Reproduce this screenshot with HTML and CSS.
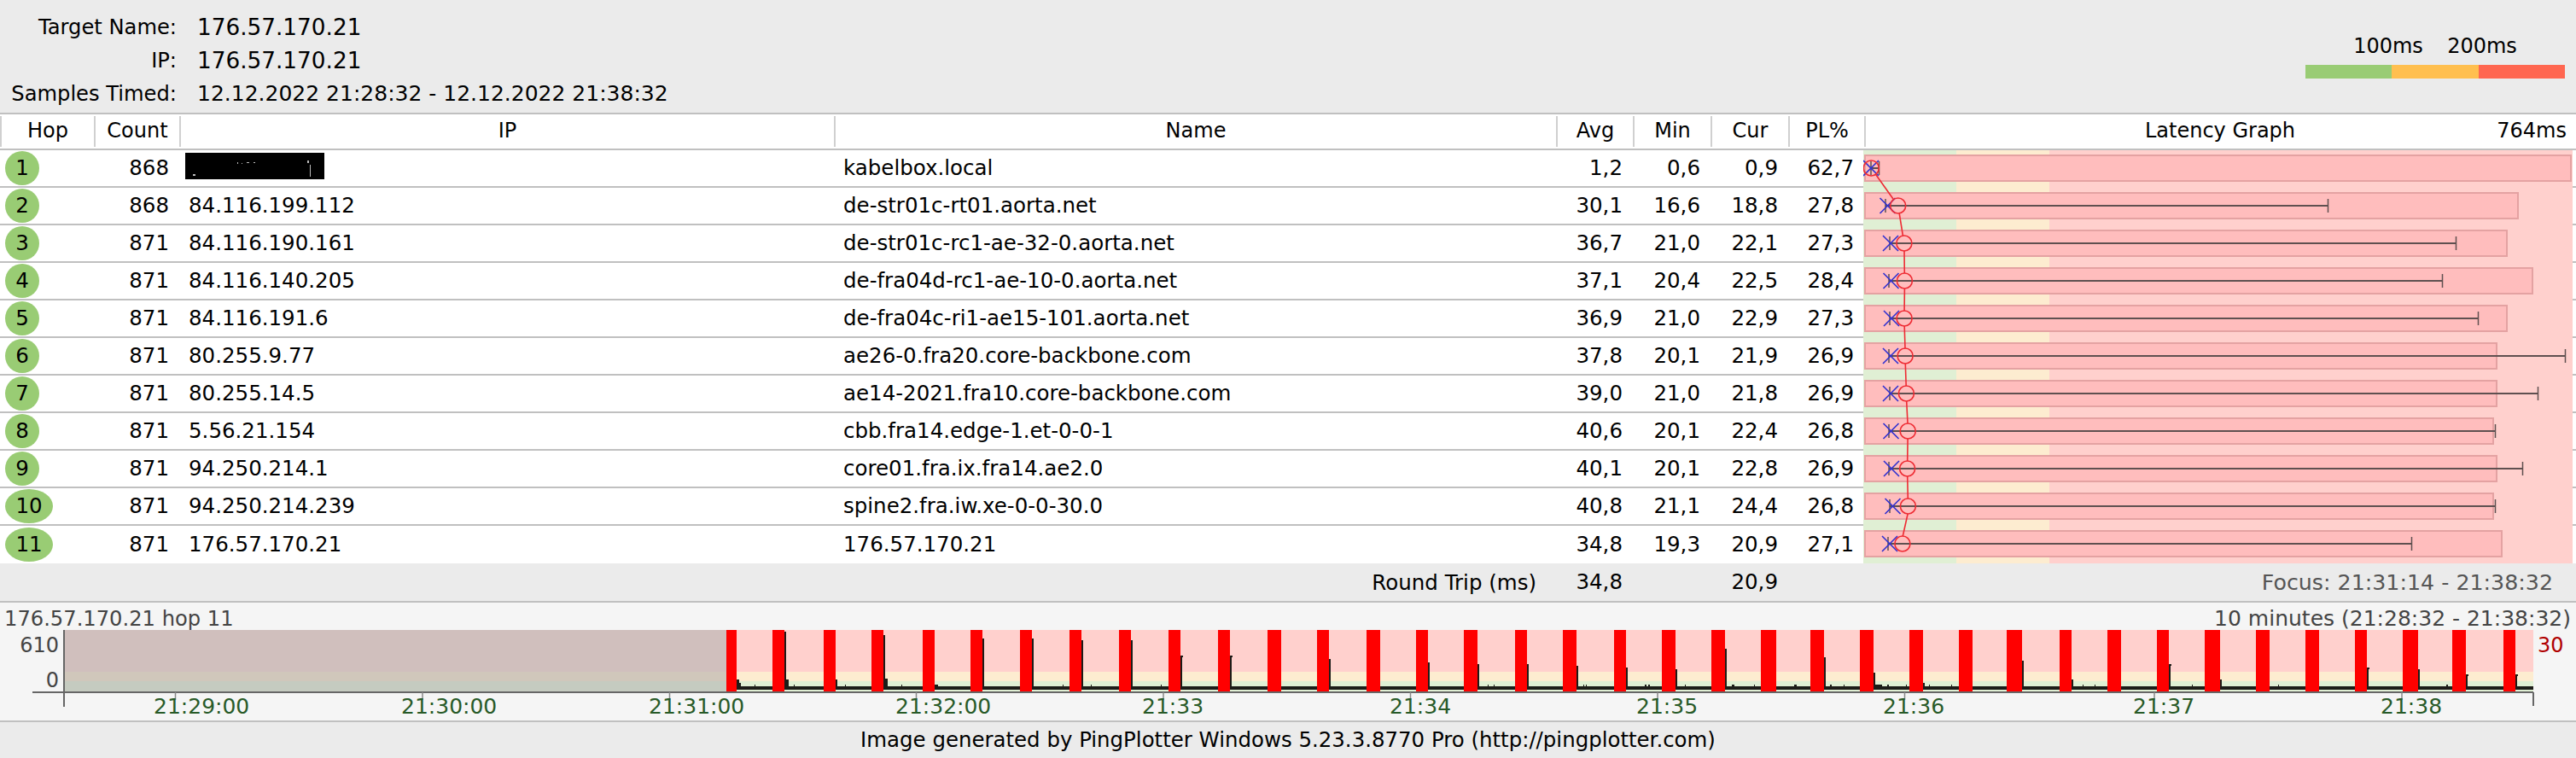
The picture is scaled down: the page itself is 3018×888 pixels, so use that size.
FILE: index.html
```html
<!DOCTYPE html>
<html lang="en">
<head>
<meta charset="utf-8">
<title>PingPlotter</title>
<link rel="stylesheet" href="styles.css">
</head>
<body>
<header class="summary">
  <dl class="fields">
    <dt>Target Name:</dt><dd>176.57.170.21</dd>
    <dt>IP:</dt><dd>176.57.170.21</dd>
    <dt>Samples Timed:</dt><dd class="long">12.12.2022 21:28:32 - 12.12.2022 21:38:32</dd>
  </dl>
  <div class="legend">
    <div class="legend-labels"><span>100ms</span><span>200ms</span></div>
    <div class="legend-bar"><i class="seg-green"></i><i class="seg-yellow"></i><i class="seg-red"></i></div>
  </div>
</header>
<div class="cols head">
  <div class="hc">Hop</div><div class="hc">Count</div><div class="hc">IP</div><div class="hc">Name</div>
  <div class="hc">Avg</div><div class="hc">Min</div><div class="hc">Cur</div><div class="hc">PL%</div>
  <div class="hc graph-head"><span>Latency Graph</span><span class="scale">764ms</span></div>
</div>
<main class="rows">
  <div class="cols row"><div class="c hop"><b>1</b></div><div class="c num">868</div><div class="c txt"><svg class="redact" width="163" height="31" viewBox="0 0 163 31"><rect width="163" height="31" fill="#000"/><path d="M61 11h1v2h-1zM66 12h1v1h-1zM72 11h3v1h-3zM80 11h2v1h-2zM143 9h2v3h-2zM146 14h1v14h-1zM9 25h3v2h-3z" fill="#bbb"/></svg></div><div class="c txt">kabelbox.local</div><div class="c num">1,2</div><div class="c num">0,6</div><div class="c num">0,9</div><div class="c num">62,7</div></div>
  <div class="cols row"><div class="c hop"><b>2</b></div><div class="c num">868</div><div class="c txt">84.116.199.112</div><div class="c txt">de-str01c-rt01.aorta.net</div><div class="c num">30,1</div><div class="c num">16,6</div><div class="c num">18,8</div><div class="c num">27,8</div></div>
  <div class="cols row"><div class="c hop"><b>3</b></div><div class="c num">871</div><div class="c txt">84.116.190.161</div><div class="c txt">de-str01c-rc1-ae-32-0.aorta.net</div><div class="c num">36,7</div><div class="c num">21,0</div><div class="c num">22,1</div><div class="c num">27,3</div></div>
  <div class="cols row"><div class="c hop"><b>4</b></div><div class="c num">871</div><div class="c txt">84.116.140.205</div><div class="c txt">de-fra04d-rc1-ae-10-0.aorta.net</div><div class="c num">37,1</div><div class="c num">20,4</div><div class="c num">22,5</div><div class="c num">28,4</div></div>
  <div class="cols row"><div class="c hop"><b>5</b></div><div class="c num">871</div><div class="c txt">84.116.191.6</div><div class="c txt">de-fra04c-ri1-ae15-101.aorta.net</div><div class="c num">36,9</div><div class="c num">21,0</div><div class="c num">22,9</div><div class="c num">27,3</div></div>
  <div class="cols row"><div class="c hop"><b>6</b></div><div class="c num">871</div><div class="c txt">80.255.9.77</div><div class="c txt">ae26-0.fra20.core-backbone.com</div><div class="c num">37,8</div><div class="c num">20,1</div><div class="c num">21,9</div><div class="c num">26,9</div></div>
  <div class="cols row"><div class="c hop"><b>7</b></div><div class="c num">871</div><div class="c txt">80.255.14.5</div><div class="c txt">ae14-2021.fra10.core-backbone.com</div><div class="c num">39,0</div><div class="c num">21,0</div><div class="c num">21,8</div><div class="c num">26,9</div></div>
  <div class="cols row"><div class="c hop"><b>8</b></div><div class="c num">871</div><div class="c txt">5.56.21.154</div><div class="c txt">cbb.fra14.edge-1.et-0-0-1</div><div class="c num">40,6</div><div class="c num">20,1</div><div class="c num">22,4</div><div class="c num">26,8</div></div>
  <div class="cols row"><div class="c hop"><b>9</b></div><div class="c num">871</div><div class="c txt">94.250.214.1</div><div class="c txt">core01.fra.ix.fra14.ae2.0</div><div class="c num">40,1</div><div class="c num">20,1</div><div class="c num">22,8</div><div class="c num">26,9</div></div>
  <div class="cols row"><div class="c hop"><b class="wide">10</b></div><div class="c num">871</div><div class="c txt">94.250.214.239</div><div class="c txt">spine2.fra.iw.xe-0-0-30.0</div><div class="c num">40,8</div><div class="c num">21,1</div><div class="c num">24,4</div><div class="c num">26,8</div></div>
  <div class="cols row last"><div class="c hop"><b class="wide">11</b></div><div class="c num">871</div><div class="c txt">176.57.170.21</div><div class="c txt">176.57.170.21</div><div class="c num">34,8</div><div class="c num">19,3</div><div class="c num">20,9</div><div class="c num">27,1</div></div>
  <svg class="graph" width="831" height="484" viewBox="2183 176 831 484">
    <rect class="b-green" x="2183" y="176" width="109" height="484"/>
    <rect class="b-yellow" x="2292" y="176" width="109" height="484"/>
    <rect class="b-pink" x="2401" y="176" width="613" height="484"/>
    <g class="pl">
      <rect x="2185" y="182" width="827" height="30"/>
      <rect x="2185" y="226" width="765" height="30"/>
      <rect x="2185" y="270" width="752" height="30"/>
      <rect x="2185" y="314" width="782" height="30"/>
      <rect x="2185" y="358" width="752" height="30"/>
      <rect x="2185" y="402" width="740" height="30"/>
      <rect x="2185" y="446" width="740" height="30"/>
      <rect x="2185" y="490" width="736" height="30"/>
      <rect x="2185" y="534" width="740" height="30"/>
      <rect x="2185" y="578" width="736" height="30"/>
      <rect x="2185" y="622" width="746" height="30"/>
    </g>
    <path class="span" d="M2192 197H2201M2209 241H2727M2214 285H2877M2213 329H2861M2214 373H2903M2213 417H3005M2214 461H2973M2213 505H2923M2213 549H2955M2214 593H2923M2212 637H2825"/>
    <path class="tick" d="M2192 189v16M2201.5 189v16M2209 233v16M2727.5 233v16M2214 277v16M2877.5 277v16M2213 321v16M2861.5 321v16M2214 365v16M2903.5 365v16M2213 409v16M3005.5 409v16M2214 453v16M2973.5 453v16M2213 497v16M2923.5 497v16M2213 541v16M2955.5 541v16M2214 585v16M2923.5 585v16M2212 629v16M2825.5 629v16"/>
    <path class="cur" d="M2183 188l18 18M2201 188l-18 18M2202.5 232l18 18M2220.5 232l-18 18M2206 276l18 18M2224 276l-18 18M2206.5 320l18 18M2224.5 320l-18 18M2207 364l18 18M2225 364l-18 18M2206 408l18 18M2224 408l-18 18M2206 452l18 18M2224 452l-18 18M2206.5 496l18 18M2224.5 496l-18 18M2207 540l18 18M2225 540l-18 18M2208.5 584l18 18M2226.5 584l-18 18M2205 628l18 18M2223 628l-18 18"/>
    <g class="avg">
      <circle cx="2192.3" cy="197" r="9"/><circle cx="2223.7" cy="241" r="9"/><circle cx="2230.9" cy="285" r="9"/><circle cx="2231.4" cy="329" r="9"/><circle cx="2231.1" cy="373" r="9"/><circle cx="2232.1" cy="417" r="9"/><circle cx="2233.4" cy="461" r="9"/><circle cx="2235.2" cy="505" r="9"/><circle cx="2234.6" cy="549" r="9"/><circle cx="2235.4" cy="593" r="9"/><circle cx="2228.9" cy="637" r="9"/>
      <path d="M2197.5 204.3L2218.5 233.7M2225.2 250L2229.4 276M2231 294L2231.3 320M2231.4 338L2231.1 364M2231.2 382L2232 408M2232.3 426L2233.2 452M2233.7 470L2235 496M2235.1 514L2234.7 540M2234.7 558L2235.3 584M2235.1 602L2229.3 628"/>
    </g>
  </svg>
</main>
<section class="cols total">
  <div class="rt-label">Round Trip (ms)</div>
  <div class="c num">34,8</div><div class="c"></div><div class="c num">20,9</div><div class="c"></div>
  <div class="focus">Focus: 21:31:14 - 21:38:32</div>
</section>
<section class="timeline">
  <div class="tl-title"><span class="tl-left">176.57.170.21 hop 11</span><span class="tl-right">10 minutes (21:28:32 - 21:38:32)</span></div>
  <svg class="plot" width="3018" height="106" viewBox="0 738 3018 106">
    <rect class="b-pink" x="75" y="738" width="2893" height="49"/>
    <rect class="b-yellow" x="75" y="787" width="2893" height="11"/>
    <rect class="b-green" x="75" y="798" width="2893" height="12"/>
    <rect class="off-pink" x="75" y="738" width="776" height="49"/>
    <rect class="off-yellow" x="75" y="787" width="776" height="11"/>
    <rect class="off-green" x="75" y="798" width="776" height="12"/>
    <path class="trace" d="M863 796h3v4h2v4H2968v4H851zM919 740h2v56h3v8h-5zM979 796h2v8h-2zM1035 744h2v51h3v9h-5zM1095 802h4v2h-4zM1151 748h2v56h-2zM1209 748h2v56h-2zM1267 750h2v54h-2zM1325 750h2v54h-2zM1383 768h3v2h-1v34h-2zM1441 768h3v2h-1v34h-2zM1557 772h2v32h-2zM1673 776h2v28h-2zM1731 778h2v26h-2zM1789 778h2v26h-2zM1847 780h2v24h-2zM1905 782h2v22h-2zM1963 784h2v20h-2zM2021 760h2v44h-2zM2137 770h2v34h-2zM2195 788h2v14h8v2h-10zM2253 800h2v4h-2zM2369 774h2v30h-2zM2427 796h2v8h-2zM2541 778h3v2h-1v24h-2zM2601 796h2v8h-2zM2773 782h3v2h-1v20h-2zM2833 784h2v20h-2zM2889 790h3v2h-1v12h-2zM2947 790h3v2h-1v12h-2zM884 802h1v2h-1zM930 802h1v2h-1zM990 802h1v2h-1zM1056 802h1v2h-1zM1245 802h1v2h-1zM1278 802h1v2h-1zM1360 802h1v2h-1zM1743 802h1v2h-1zM1750 802h1v2h-1zM1855 802h1v2h-1zM1858 802h1v2h-1zM1927 802h2v2h-2zM1931 802h2v2h-2zM1974 802h1v2h-1zM2029 802h3v2h-3zM2055 802h1v2h-1zM2102 802h3v2h-3zM2144 802h2v2h-2zM2160 802h1v2h-1zM2211 802h1v2h-1zM2212 802h1v2h-1zM2233 802h1v2h-1zM2260 802h1v2h-1zM2286 802h1v2h-1zM2440 802h1v2h-1zM2454 802h1v2h-1zM2568 802h1v2h-1zM2669 802h1v2h-1zM2866 802h2v2h-2z"/>
    <path class="bars" d="M851 738h12v72h-12zM905 738h14v72h-14zM965 738h14v72h-14zM1021 738h14v72h-14zM1081 738h14v72h-14zM1137 738h14v72h-14zM1195 738h14v72h-14zM1253 738h14v72h-14zM1311 738h14v72h-14zM1369 738h14v72h-14zM1427 738h14v72h-14zM1485 738h16v72h-16zM1543 738h14v72h-14zM1601 738h16v72h-16zM1659 738h14v72h-14zM1715 738h16v72h-16zM1775 738h14v72h-14zM1831 738h16v72h-16zM1891 738h14v72h-14zM1947 738h16v72h-16zM2005 738h16v72h-16zM2063 738h18v72h-18zM2121 738h16v72h-16zM2179 738h16v72h-16zM2237 738h16v72h-16zM2295 738h16v72h-16zM2351 738h18v72h-18zM2413 738h14v72h-14zM2469 738h16v72h-16zM2527 738h14v72h-14zM2583 738h18v72h-18zM2643 738h16v72h-16zM2701 738h16v72h-16zM2759 738h14v72h-14zM2815 738h18v72h-18zM2873 738h16v72h-16zM2933 738h14v72h-14z"/>
    <path class="axis" d="M38 811H2968M75 738V828M2968 811V827"/>
    <path class="minor" d="M205.500 811v9M495 811v9M784.500 811v9M1073.500 811v9M1363 811v9M1652.500 811v9M1942 811v9M2231.500 811v9M2524 811v9M2814 811v9"/>
    <text class="yl" x="69" y="764" text-anchor="end">610</text>
    <text class="yl" x="69" y="805" text-anchor="end">0</text>
    <text class="yh" x="2973" y="764">30</text>
    <g class="xl">
      <text x="180" y="836">21:29:00</text><text x="470" y="836">21:30:00</text><text x="760" y="836">21:31:00</text><text x="1049" y="836">21:32:00</text><text x="1338" y="836">21:33</text><text x="1628" y="836">21:34</text><text x="1917" y="836">21:35</text><text x="2206" y="836">21:36</text><text x="2499" y="836">21:37</text><text x="2789" y="836">21:38</text>
    </g>
  </svg>
</section>
<footer class="foot">Image generated by PingPlotter Windows 5.23.3.8770 Pro (http://pingplotter.com)</footer>
</body>
</html>
```
FILE: styles.css
```css
* { box-sizing: border-box; }
html, body { margin: 0; padding: 0; }
body {
  width: 3018px;
  height: 888px;
  overflow: hidden;
  background: #ebebeb;
  color: #000;
  font-family: "DejaVu Sans", Verdana, sans-serif;
  font-size: 24.5px;
}
.summary {
  height: 134px;
  border-bottom: 2px solid #c0c0c0;
  display: flex;
  justify-content: space-between;
  align-items: flex-start;
  padding: 12px 13px 0 0;
}
.fields {
  margin: 0;
  display: grid;
  grid-template-columns: 207px auto;
  column-gap: 24px;
  grid-auto-rows: 39px;
  align-items: center;
  font-size: 24.2px;
}
.fields dt { text-align: right; white-space: nowrap; }
.fields dd { margin: 0; white-space: nowrap; font-size: 26.3px; }
.fields dd.long { font-size: 25px; }
.legend { width: 304px; padding-top: 28px; }
.legend-labels { display: flex; height: 28px; line-height: 28px; padding-left: 42px; margin-bottom: 8px; }
.legend-labels span { width: 110px; text-align: center; font-size: 24px; }
.legend-bar { display: flex; height: 16px; }
.legend-bar i { flex: 1; }
.seg-green { background: #99cc74; }
.seg-yellow { background: #ffbf4f; }
.seg-red { background: #ff6650; }

.cols {
  display: grid;
  grid-template-columns: 110px 100px 767px 846px 90px 91px 91px 89px 834px;
}
.head {
  height: 42px;
  background: #fff;
  border-bottom: 2px solid #c0c0c0;
  padding-top: 2px;
  padding-bottom: 2px;
  font-size: 24px;
}
.hc {
  text-align: center;
  line-height: 34px;
  border-left: 2px solid #d0d0d0;
  white-space: nowrap;
}
.graph-head { display: flex; justify-content: flex-end; padding-right: 11px; position: relative; }
.graph-head span:first-child { position: absolute; left: 0; right: 2px; text-align: center; }
.rows { position: relative; height: 484px; background: #fff; }
.row { height: 44px; border-bottom: 2px solid #c0c0c0; align-items: center; }
.row.last { border-bottom: 0; }
.c { white-space: nowrap; height: 42px; line-height: 42px; }
.num { text-align: right; padding-right: 12px; }
.txt { padding-left: 11px; }
.hop { padding-left: 6px; display: flex; align-items: center; }
.hop b {
  display: block;
  width: 40px;
  height: 40px;
  line-height: 40px;
  border-radius: 50%;
  background: #99cc74;
  text-align: center;
  font-weight: normal;
}
.hop b.wide { width: 56px; }
.redact { display: block; margin: 3px 0 0 -4px; }
.graph { position: absolute; left: 2183px; top: 0; display: block; }
.b-green { fill: #e0efd4; }
.b-yellow { fill: #fdecd0; }
.b-pink { fill: #ffd0cd; }
.pl rect { fill: #ffbdbd; stroke: #e4a2a2; stroke-width: 2; }
.span { fill: none; stroke: #5f5050; stroke-width: 2; }
.tick { fill: none; stroke: #5f5050; stroke-width: 1.5; }
.cur { fill: none; stroke: #3030d0; stroke-width: 1.6; }
.avg circle, .avg path { fill: none; stroke: #ee2b33; stroke-width: 1.6; }

.total { height: 46px; border-bottom: 2px solid #c0c0c0; align-items: center; }
.rt-label { grid-column: 1 / 5; text-align: right; padding-right: 23px; }
.focus { text-align: right; padding-right: 27px; color: #555; font-size: 25.3px; }

.timeline { height: 140px; background: #f5f5f5; border-bottom: 2px solid #c0c0c0; color: #444; }
.tl-title { display: flex; justify-content: space-between; height: 32px; line-height: 38px; padding: 0 6px 0 5px; }
.tl-left { font-size: 24.2px; }
.tl-right { font-size: 25px; }
.plot { display: block; }
.off-pink { fill: #d0bfbd; }
.off-yellow { fill: #d0c7bb; }
.off-green { fill: #c5cbc0; }
.trace { fill: #1c1c18; }
.bars { fill: #ff0000; }
.axis { fill: none; stroke: #666; stroke-width: 2; }
.minor { fill: none; stroke: #888; stroke-width: 1.5; }
.yl { fill: #444; font-size: 24px; }
.yh { fill: #b00000; font-size: 24px; }
.xl { fill: #285a28; font-size: 25px; }
.foot { height: 42px; line-height: 42px; text-align: center; font-size: 24.45px; }
```
